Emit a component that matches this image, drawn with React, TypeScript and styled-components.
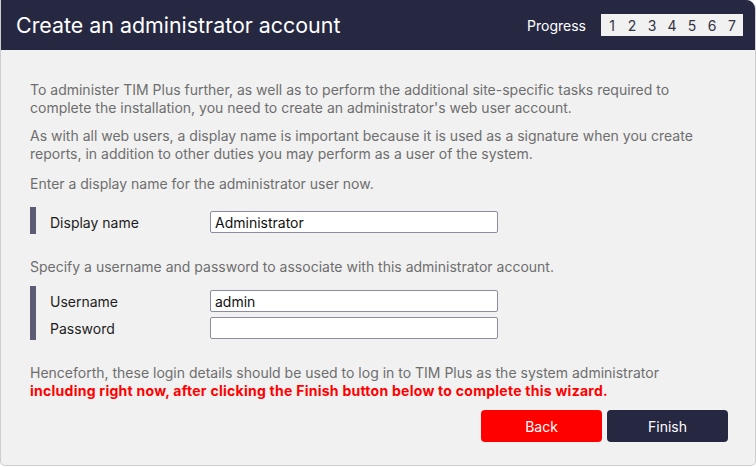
import React from "react";
import styled, { createGlobalStyle } from "styled-components";

const Global = createGlobalStyle`
  html, body { margin: 0; padding: 0; background: #ffffff; }
  body { font-family: Inter, "Noto Sans", sans-serif; }
  * { box-sizing: border-box; }
`;

const Panel = styled.div`
  width: 756px;
  height: 466px;
  background: #f1f1f1;
  border: 1px solid #cdcdcd;
  border-top: none;
  border-radius: 0 9px 5px 5px;
  overflow: hidden;
  display: flex;
  flex-direction: column;
`;

const Header = styled.header`
  height: 50px;
  background: #262842;
  display: flex;
  align-items: center;
  justify-content: space-between;
  padding: 0 13px 0 16px;
  margin: 0 -1px;
`;

const Title = styled.h1`
  margin: 0;
  font-size: 21.4px;
  font-weight: 400;
  color: #ffffff;
  letter-spacing: 0;
`;

const ProgressWrap = styled.div`
  display: flex;
  align-items: center;
  gap: 15px;
`;

const ProgressLabel = styled.span`
  color: #ffffff;
  font-size: 14px;
`;

const Steps = styled.div`
  display: flex;
  background: #f1f1f1;
  height: 22px;
  padding: 0 1px;
  align-items: center;
`;

const Step = styled.span`
  width: 20px;
  text-align: center;
  font-size: 14px;
  color: #333344;
`;

const Body = styled.div`
  flex: 1;
  padding: 31px 27px 0 29px;
  display: flex;
  flex-direction: column;
`;

const Para = styled.p<{ $mb?: number }>`
  margin: 0 0 ${(p) => p.$mb ?? 11}px;
  font-size: 14px;
  line-height: 18px;
  color: #6e6e6e;
`;

const Warn = styled.span`
  display: block;
  color: #ff0000;
  font-weight: 700;
  letter-spacing: 0.26px;
`;

const FieldGroup = styled.div<{ $mb: number }>`
  border-left: 6px solid #5b5b73;
  padding: 4px 0 1px 14px;
  margin: 0 0 ${(p) => p.$mb}px;
  display: flex;
  flex-direction: column;
  gap: 5px;
`;

const FieldRow = styled.label`
  display: grid;
  grid-template-columns: 160px 288px;
  align-items: center;
  height: 22px;
`;

const FieldLabel = styled.span`
  font-size: 14px;
  color: #1d1d1d;
`;

const Input = styled.input`
  height: 22px;
  width: 288px;
  border: 1px solid #8c8ca0;
  border-radius: 2px;
  background: #ffffff;
  font-family: Inter, "Noto Sans", sans-serif;
  font-size: 14px;
  color: #111111;
  padding: 0 4px;
  outline: none;
`;

const Actions = styled.div`
  display: flex;
  justify-content: flex-end;
  gap: 5px;
  margin-top: 10px;
`;

const Button = styled.button<{ $variant: "danger" | "primary" }>`
  width: 121px;
  height: 32px;
  border: none;
  border-radius: 4px;
  background: ${(p) => (p.$variant === "danger" ? "#ff0000" : "#262842")};
  color: #ffffff;
  font-family: Inter, "Noto Sans", sans-serif;
  font-size: 14px;
  cursor: pointer;
`;

export default function App() {
  return (
    <>
      <Global />
      <Panel>
        <Header>
          <Title>Create an administrator account</Title>
          <ProgressWrap>
            <ProgressLabel>Progress</ProgressLabel>
            <Steps>
              {[1, 2, 3, 4, 5, 6, 7].map((n) => (
                <Step key={n}>{n}</Step>
              ))}
            </Steps>
          </ProgressWrap>
        </Header>
        <Body>
          <Para $mb={10}>
            To administer TIM Plus further, as well as to perform the additional site-specific tasks required to
            complete the installation, you need to create an administrator's web user account.
          </Para>
          <Para $mb={12}>
            As with all web users, a display name is important because it is used as a signature when you create
            reports, in addition to other duties you may perform as a user of the system.
          </Para>
          <Para $mb={14}>Enter a display name for the administrator user now.</Para>
          <FieldGroup $mb={24}>
            <FieldRow>
              <FieldLabel>Display name</FieldLabel>
              <Input defaultValue="Administrator" />
            </FieldRow>
          </FieldGroup>
          <Para $mb={10}>Specify a username and password to associate with this administrator account.</Para>
          <FieldGroup $mb={24}>
            <FieldRow>
              <FieldLabel>Username</FieldLabel>
              <Input defaultValue="admin" />
            </FieldRow>
            <FieldRow>
              <FieldLabel>Password</FieldLabel>
              <Input type="password" defaultValue="" />
            </FieldRow>
          </FieldGroup>
          <Para $mb={0}>
            Henceforth, these login details should be used to log in to TIM Plus as the system administrator
            <Warn>including right now, after clicking the Finish button below to complete this wizard.</Warn>
          </Para>
          <Actions>
            <Button $variant="danger">Back</Button>
            <Button $variant="primary">Finish</Button>
          </Actions>
        </Body>
      </Panel>
    </>
  );
}
